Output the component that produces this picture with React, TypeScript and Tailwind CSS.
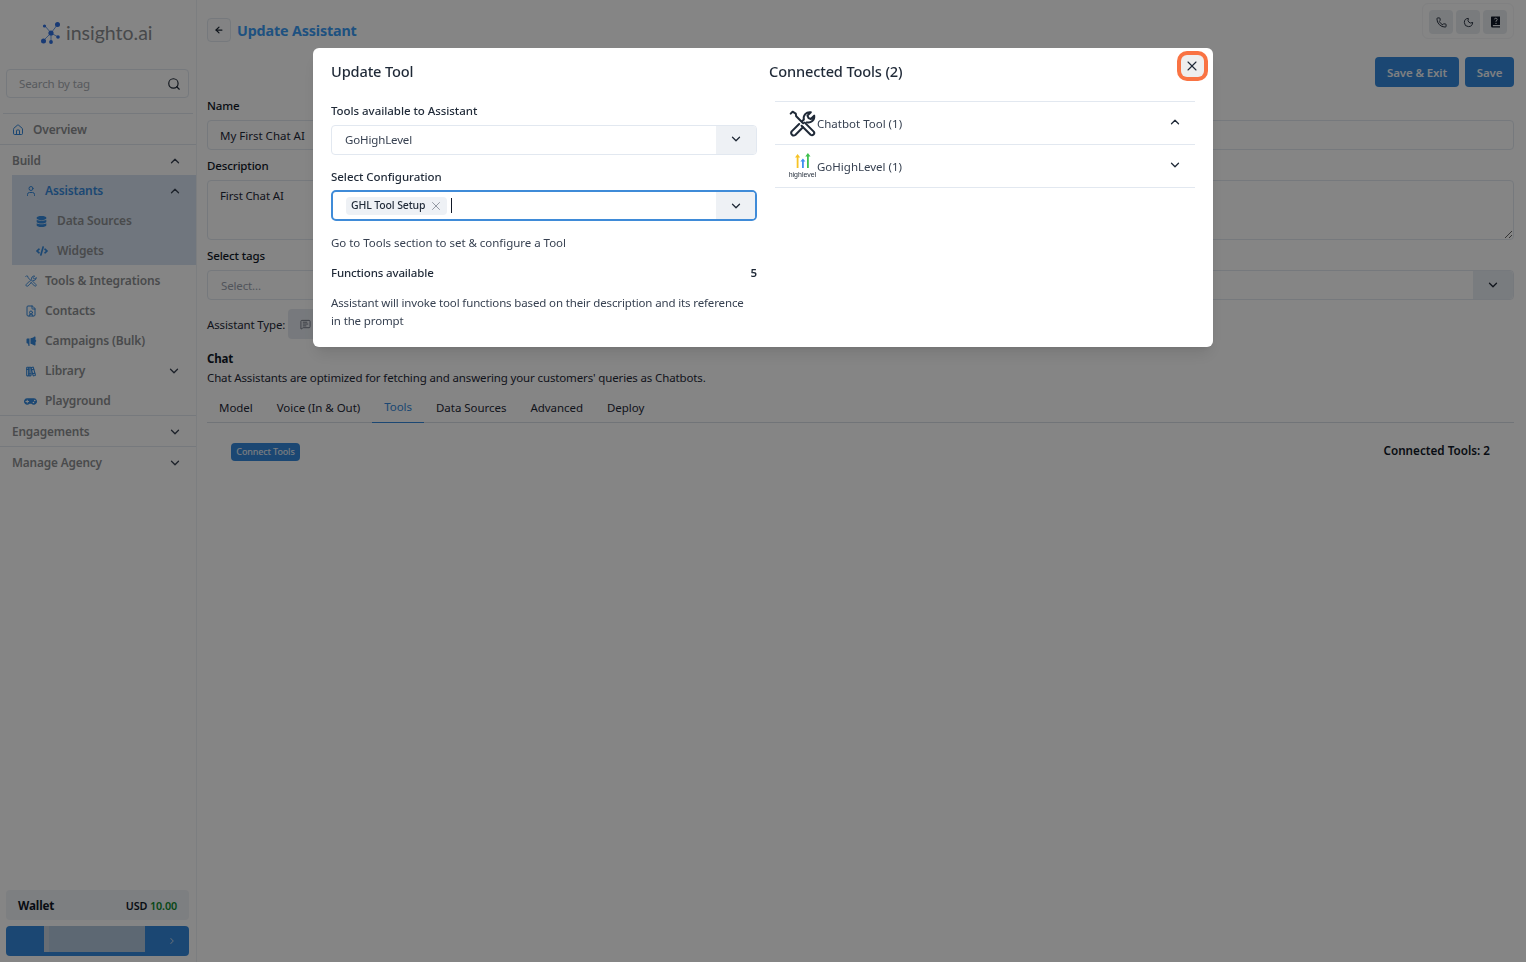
import React from "react";
import { House, User, FileUser, ChevronUp, ChevronDown, ChevronRight, Search, ArrowLeft, Phone, Moon, X, MessageSquareText } from "lucide-react";
import { FaDatabase, FaCode, FaGamepad } from "react-icons/fa";
import { TbBooks } from "react-icons/tb";
import { RiMegaphoneFill } from "react-icons/ri";

const font = { fontFamily: '"Noto Sans", sans-serif' };

function Logo() {
  return (
    <svg width="20" height="22" viewBox="0 0 20 22" className="shrink-0">
      <g stroke="#6f9fe8" strokeWidth="1" fill="none">
        <path d="M10 11 L4 4 M10 11 L17 2 M10 11 L2 19 M10 11 L10 20 M10 11 L17 15" />
      </g>
      <g fill="#2f6fe0">
        <circle cx="3.5" cy="4" r="1.6" />
        <circle cx="16.5" cy="2.5" r="2.5" />
        <circle cx="10" cy="11" r="2.6" />
        <circle cx="2.5" cy="19" r="2.5" />
        <circle cx="10" cy="20" r="1.9" />
        <circle cx="17" cy="15" r="1.8" />
      </g>
    </svg>
  );
}

function ToolsIcon({ size = 27, color = "#1f2937", width = 1.8 }: { size?: number; color?: string; width?: number }) {
  return (
    <svg width={size} height={size} viewBox="0 0 24 24" fill="none" stroke={color} strokeWidth={width} strokeLinejoin="round" strokeLinecap="round" className="shrink-0">
      <path d="M1.5 3.2 L3.2 1.5 L6 3.2 L6.4 5.6 L12.6 11.8" />
      <path d="M14 11.2 L22 19.2 A2 2 0 0 1 19.2 22 L11.2 14" />
      <path d="M9 12.4 L2.4 19 A2.3 2.3 0 0 0 5.6 22.2 L12.4 15.4" />
      <path d="M11.4 10.2 L13.2 8.4 C12.4 4.8 15.2 1.4 19.4 2 L16.4 5 L17.4 7.2 L19.4 8 L22.4 5 C23 9 19.4 11.8 16 11" />
    </svg>
  );
}

function HelpBook() {
  return (
    <svg width="11" height="12" viewBox="0 0 11 12">
      <path d="M1.5 0.5 H10 V9 H3 A1 1 0 0 0 3 10.2 H10 V11.5 H2.5 A1.5 1.5 0 0 1 1 10 V1 Z" fill="#111827" />
      <path d="M4.4 3.4 A1.4 1.3 0 1 1 6 4.8 V5.8" stroke="#e8ebf0" strokeWidth="0.9" fill="none" />
      <circle cx="6" cy="7.4" r="0.55" fill="#e8ebf0" />
    </svg>
  );
}

function HighLevelIcon() {
  return (
    <div className="flex flex-col items-center shrink-0 w-[29px]">
      <svg width="16" height="16" viewBox="0 0 16 16" className="-mt-[2px]">
        <path d="M1.7 15 V4.4 H0 L2.6 1 L5.2 4.4 H3.5 V15 Z" fill="#f7c325" />
        <path d="M7 15 V8.6 H5.4 L7.9 5.4 L10.4 8.6 H8.8 V15 Z" fill="#3f8ff0" />
        <path d="M12 15 V3.6 H10.3 L12.9 0 L15.5 3.6 H13.8 V15 Z" fill="#3fc14f" />
      </svg>
      <span className="mt-[2px] text-[7px] leading-[7px] text-[#1f2937] tracking-[0px]" style={{ fontFamily: '"Liberation Sans", sans-serif' }}>highlevel</span>
    </div>
  );
}

function NavRow({ icon, label, chevron }: { icon: React.ReactNode; label: string; chevron?: "down" }) {
  return (
    <div className="h-[30px] pt-[2px] flex items-center pl-[24px] pr-[15px]">
      <span className="w-[13px] h-[12px] flex items-center justify-center text-[#3589dc] mr-[8px] shrink-0">{icon}</span>
      <span className="text-[12px] font-semibold text-[#8d8f92]">{label}</span>
      {chevron === "down" && <ChevronDown size={14} strokeWidth={2.2} className="ml-auto text-[#374151]" />}
    </div>
  );
}

function Section({ label, chevron }: { label: string; chevron: "up" | "down" }) {
  return (
    <div className="h-[30px] pt-[2px] flex items-center pl-[12px] pr-[14px]">
      <span className="text-[11.8px] font-semibold text-[#8d8f92]">{label}</span>
      {chevron === "up" ? <ChevronUp size={14} strokeWidth={2.2} className="ml-auto text-[#374151]" /> : <ChevronDown size={14} strokeWidth={2.2} className="ml-auto text-[#374151]" />}
    </div>
  );
}

function Sidebar() {
  return (
    <aside className="w-[197px] shrink-0 h-full border-r border-[#eef1f5] flex flex-col">
      <div className="h-[69px] flex items-center pl-[41px] pb-[4px] gap-[5px]">
        <Logo />
        <span className="text-[19.5px] text-[#8a8d91] tracking-[0px]" style={{ fontFamily: "Lato, sans-serif" }}>insighto.ai</span>
      </div>
      <div className="mx-[6px] w-[183px] h-[29px] border border-[#e2e8f0] rounded-[4px] flex items-center pl-[12px] pr-[7px]">
        <span className="text-[11.5px] text-[#a8adb3]">Search by tag</span>
        <Search size={14} strokeWidth={2} className="ml-auto text-[#1f2937]" />
      </div>
      <div className="mt-[15px] mx-[3px] border-t border-[#e2e8f0]" />
      <div className="h-[30px] pt-[2px] flex items-center pl-[12px]">
        <House size={12} className="text-[#3589dc] mr-[9px]" />
        <span className="text-[12px] font-semibold text-[#8d8f92]">Overview</span>
      </div>
      <div className="border-t border-[#e2e8f0]" />
      <Section label="Build" chevron="up" />
      <div className="ml-[12px] bg-[#d7e3f1]">
        <div className="h-[30px] pt-[2px] flex items-center pl-[12px] pr-[14px]">
          <span className="w-[13px] mr-[8px] text-[#3589dc] flex justify-center"><User size={12} /></span>
          <span className="text-[12px] font-semibold text-[#3589dc]">Assistants</span>
          <ChevronUp size={14} strokeWidth={2.2} className="ml-auto text-[#374151]" />
        </div>
        <div className="h-[30px] pt-[2px] flex items-center pl-[24px]">
          <FaDatabase size={11} className="text-[#3589dc] mr-[10px]" />
          <span className="text-[12px] font-semibold text-[#8d8f92]">Data Sources</span>
        </div>
        <div className="h-[30px] pt-[2px] flex items-center pl-[24px]">
          <FaCode size={12} className="text-[#3589dc] mr-[9px]" />
          <span className="text-[12px] font-semibold text-[#8d8f92]">Widgets</span>
        </div>
      </div>
      <NavRow icon={<ToolsIcon size={12} color="#3589dc" width={1.8} />} label="Tools & Integrations" />
      <NavRow icon={<FileUser size={12} />} label="Contacts" />
      <NavRow icon={<RiMegaphoneFill size={12} />} label="Campaigns (Bulk)" />
      <NavRow icon={<TbBooks size={13} />} label="Library" chevron="down" />
      <NavRow icon={<FaGamepad size={13} />} label="Playground" />
      <div className="border-t border-[#e2e8f0]" />
      <Section label="Engagements" chevron="down" />
      <div className="border-t border-[#e2e8f0]" />
      <Section label="Manage Agency" chevron="down" />
      <div className="mt-auto mx-[6px] w-[183px] h-[30px] pt-[2px] bg-[#f0f3f7] rounded-[4px] flex items-center pl-[12px] pr-[12px]">
        <span className="text-[11.7px] font-bold text-[#111827]">Wallet</span>
        <span className="ml-auto text-[10.8px] font-semibold text-[#111827]">USD <span className="text-[#0f8a2f]">10.00</span></span>
      </div>
      <div className="mx-[6px] w-[183px] h-[30px] mt-[6px] mb-[6px] bg-[#3589dc] rounded-[4px] flex items-start overflow-hidden">
        <div className="ml-[38px] w-[101px] h-[26px] bg-[#b3c8dc] border-l-[5px] border-[#c5d2df]" />
        <ChevronRight size={10} strokeWidth={2.5} className="ml-[22px] mt-[10px] text-[#b5cde6]" />
      </div>
    </aside>
  );
}

function Main() {
  return (
    <main className="flex-1 min-w-0 pl-[10px] pr-[12px] flex flex-col">
      <div className="h-[57px] flex items-start">
        <div className="mt-[18px] w-[24px] h-[24px] border border-[#e2e8f0] rounded-[4px] flex items-center justify-center bg-[#fbfcfd]">
          <ArrowLeft size={10} strokeWidth={3} className="text-[#1f2937]" />
        </div>
        <h1 className="mt-[19px] ml-[6px] text-[14.3px] leading-[24px] font-bold text-[#3a9cf5]">Update Assistant</h1>
        <div className="ml-auto mt-[3px] h-[36px] px-[6px] pt-[6px] border border-[#f5f6f8] rounded-[6px] flex items-start gap-[3px]">
          {[<Phone size={11} />, <Moon size={11} />, <HelpBook />].map((ic, i) => (
            <span key={i} className="w-[24px] h-[24px] rounded-[4px] bg-[#e8ebf0] flex items-center justify-center text-[#1f2937]">{ic}</span>
          ))}
        </div>
      </div>
      <div className="h-[30px] flex justify-end gap-[6px]">
        <button className="w-[84px] h-[30px] pt-[1px] rounded-[4px] bg-[#3589dc] text-[#f2f5f9] text-[11.5px] font-semibold">Save &amp; Exit</button>
        <button className="w-[49px] h-[30px] pt-[1px] rounded-[4px] bg-[#3589dc] text-[#f2f5f9] text-[11.5px] font-semibold">Save</button>
      </div>
      <label className="mt-[9px] h-[18px] leading-[20px] text-[11.5px] font-medium text-[#111827]">Name</label>
      <div className="mt-[6px] h-[30px] pt-[2px] border border-[#e2e8f0] rounded-[4px] flex items-center pl-[12px] text-[11.5px] tracking-[0px] text-[#1f2937]">My First Chat AI</div>
      <label className="mt-[6px] h-[18px] leading-[20px] text-[11.5px] font-medium text-[#111827]">Description</label>
      <textarea readOnly defaultValue="First Chat AI" className="mt-[6px] h-[60px] shrink-0 border border-[#e2e8f0] rounded-[4px] pl-[12px] pt-[6px] text-[11.5px] leading-[18px] text-[#1f2937] outline-none" style={font} />
      <label className="mt-[6px] h-[18px] leading-[20px] text-[11.5px] font-medium text-[#111827]">Select tags</label>
      <div className="mt-[6px] h-[30px] border border-[#e2e8f0] rounded-[4px] flex items-center pl-[13px] text-[11.5px] text-[#9ca3af]">
        <span className="pt-[2px]">Select...</span>
        <span className="ml-auto w-[40px] h-full bg-[#e9edf3] flex items-center justify-center rounded-r-[4px]"><ChevronDown size={14} strokeWidth={2.2} className="text-[#1f2937]" /></span>
      </div>
      <div className="mt-[9px] h-[30px] flex items-center">
        <span className="pt-[2px] text-[11.5px] text-[#1f2937]">Assistant Type:</span>
        <span className="ml-[3px] w-[60px] h-[30px] rounded-[4px] bg-[#e5e9ef] flex items-center pl-[12px]"><MessageSquareText size={11} className="text-[#6b7280]" /></span>
      </div>
      <div className="mt-[11px] h-[18px] leading-[18px] text-[11.5px] font-bold text-[#111827]">Chat</div>
      <div className="mt-[1px] h-[18px] leading-[18px] text-[11.5px] text-[#1f2937]">Chat Assistants are optimized for fetching and answering your customers' queries as Chatbots.</div>
      <div className="mt-[5px] h-[31px] border-b border-[#d9dee6] flex items-stretch text-[11.5px] tracking-[-0.04px] text-[#1f2937]">
        {["Model", "Voice (In & Out)", "Tools", "Data Sources", "Advanced", "Deploy"].map((t) => (
          <div key={t} className={`px-[12px] flex items-center -mb-[1px] ${t === "Tools" ? "text-[#3589dc] border-b border-[#3589dc]" : ""}`}>{t}</div>
        ))}
      </div>
      <div className="mt-[20px] h-[18px] flex items-center pl-[24px] pr-[24px]">
        <button className="w-[69px] h-[18px] rounded-[4px] bg-[#3589dc] text-[#e6eef7] text-[9px] font-medium">Connect Tools</button>
        <span className="ml-auto pb-[2px] text-[11.7px] tracking-[0px] font-semibold text-[#111827]">Connected Tools: 2</span>
      </div>
    </main>
  );
}

function Modal() {
  return (
    <div className="fixed inset-0 bg-black/[0.48]">
      <div className="absolute left-[313px] top-[48px] w-[900px] h-[299px] bg-white rounded-[6px] shadow-lg flex pl-[18px] pr-[18px]">
        <div className="w-[426px] shrink-0">
          <h2 className="mt-[11px] h-[24px] leading-[24px] text-[14.6px] font-medium text-[#1f2937]">Update Tool</h2>
          <div className="mt-[19px] h-[18px] leading-[18px] text-[11.5px] tracking-[-0.05px] font-medium text-[#1f2937]">Tools available to Assistant</div>
          <div className="mt-[5px] h-[30px] border border-[#e2e8f0] rounded-[4px] flex items-center pl-[13px] text-[11.5px] text-[#374151] overflow-hidden">
            GoHighLevel
            <span className="ml-auto w-[40px] h-full bg-[#eef1f5] flex items-center justify-center"><ChevronDown size={14} strokeWidth={2.2} className="text-[#1f2937] -mt-[2px]" /></span>
          </div>
          <div className="mt-[13px] h-[18px] leading-[18px] text-[11.5px] tracking-[-0.05px] font-medium text-[#1f2937]">Select Configuration</div>
          <div className="mt-[4px] h-[31px] border-2 border-[#3f8bd8] rounded-[5px] flex items-center pl-[13px] text-[12px] overflow-hidden">
            <span className="h-[18px] pl-[5px] pr-[4px] bg-[#eef1f5] rounded-[4px] flex items-center text-[10.5px] font-medium text-[#1f2937]">GHL Tool Setup<X size={14} strokeWidth={1.2} className="ml-[4px] text-[#6b7280]" /></span>
            <span className="ml-[4px] w-[1px] h-[15px] bg-[#111827]" />
            <span className="ml-auto -mr-[1px] w-[40px] h-full bg-[#eef1f5] flex items-center justify-center"><ChevronDown size={14} strokeWidth={2.2} className="text-[#1f2937]" /></span>
          </div>
          <div className="mt-[13px] h-[18px] leading-[18px] text-[11.5px] tracking-[-0.03px] text-[#374151]">Go to Tools section to set &amp; configure a Tool</div>
          <div className="mt-[12px] h-[18px] leading-[18px] text-[11.5px] font-medium text-[#1f2937] flex justify-between"><span>Functions available</span><span className="font-semibold">5</span></div>
          <p className="mt-[12px] pr-[10px] leading-[18px] text-[11.5px] text-[#374151]">Assistant will invoke tool functions based on their description and its reference in the prompt</p>
        </div>
        <div className="flex-1 min-w-0 ml-[12px]">
          <h2 className="mt-[11px] h-[24px] leading-[24px] text-[14.6px] font-medium text-[#1f2937]">Connected Tools (2)</h2>
          <div className="mt-[18px] ml-[6px] border-t border-[#e2e8f0]">
            <div className="h-[43px] border-b border-[#e2e8f0] flex items-center pl-[14px] pr-[13px] gap-[1px]">
              <ToolsIcon />
              <span className="pt-[2px] text-[11.5px] tracking-[0px] text-[#374151]">Chatbot Tool (1)</span>
              <ChevronUp size={14} strokeWidth={2.2} className="ml-auto text-[#1f2937] -mt-[2px]" />
            </div>
            <div className="h-[43px] border-b border-[#e2e8f0] flex items-center pl-[13px] pr-[13px]">
              <HighLevelIcon />
              <span className="pt-[2px] text-[11.5px] tracking-[0px] text-[#374151]">GoHighLevel (1)</span>
              <ChevronDown size={14} strokeWidth={2.2} className="ml-auto text-[#1f2937] -mt-[2px]" />
            </div>
          </div>
        </div>
        <button className="absolute left-[868px] top-[7px] w-[23px] h-[22px] rounded-[6px] bg-[#eeeeee] ring-4 ring-[#f97343] flex items-center justify-center">
          <X size={16} strokeWidth={1.6} className="text-[#1f2937] -ml-[1px]" />
        </button>
      </div>
    </div>
  );
}

export default function App() {
  return (
    <div className="w-[1526px] h-[962px] bg-white flex overflow-hidden relative tracking-[-0.14px]" style={font}>
      <Sidebar />
      <Main />
      <Modal />
    </div>
  );
}
